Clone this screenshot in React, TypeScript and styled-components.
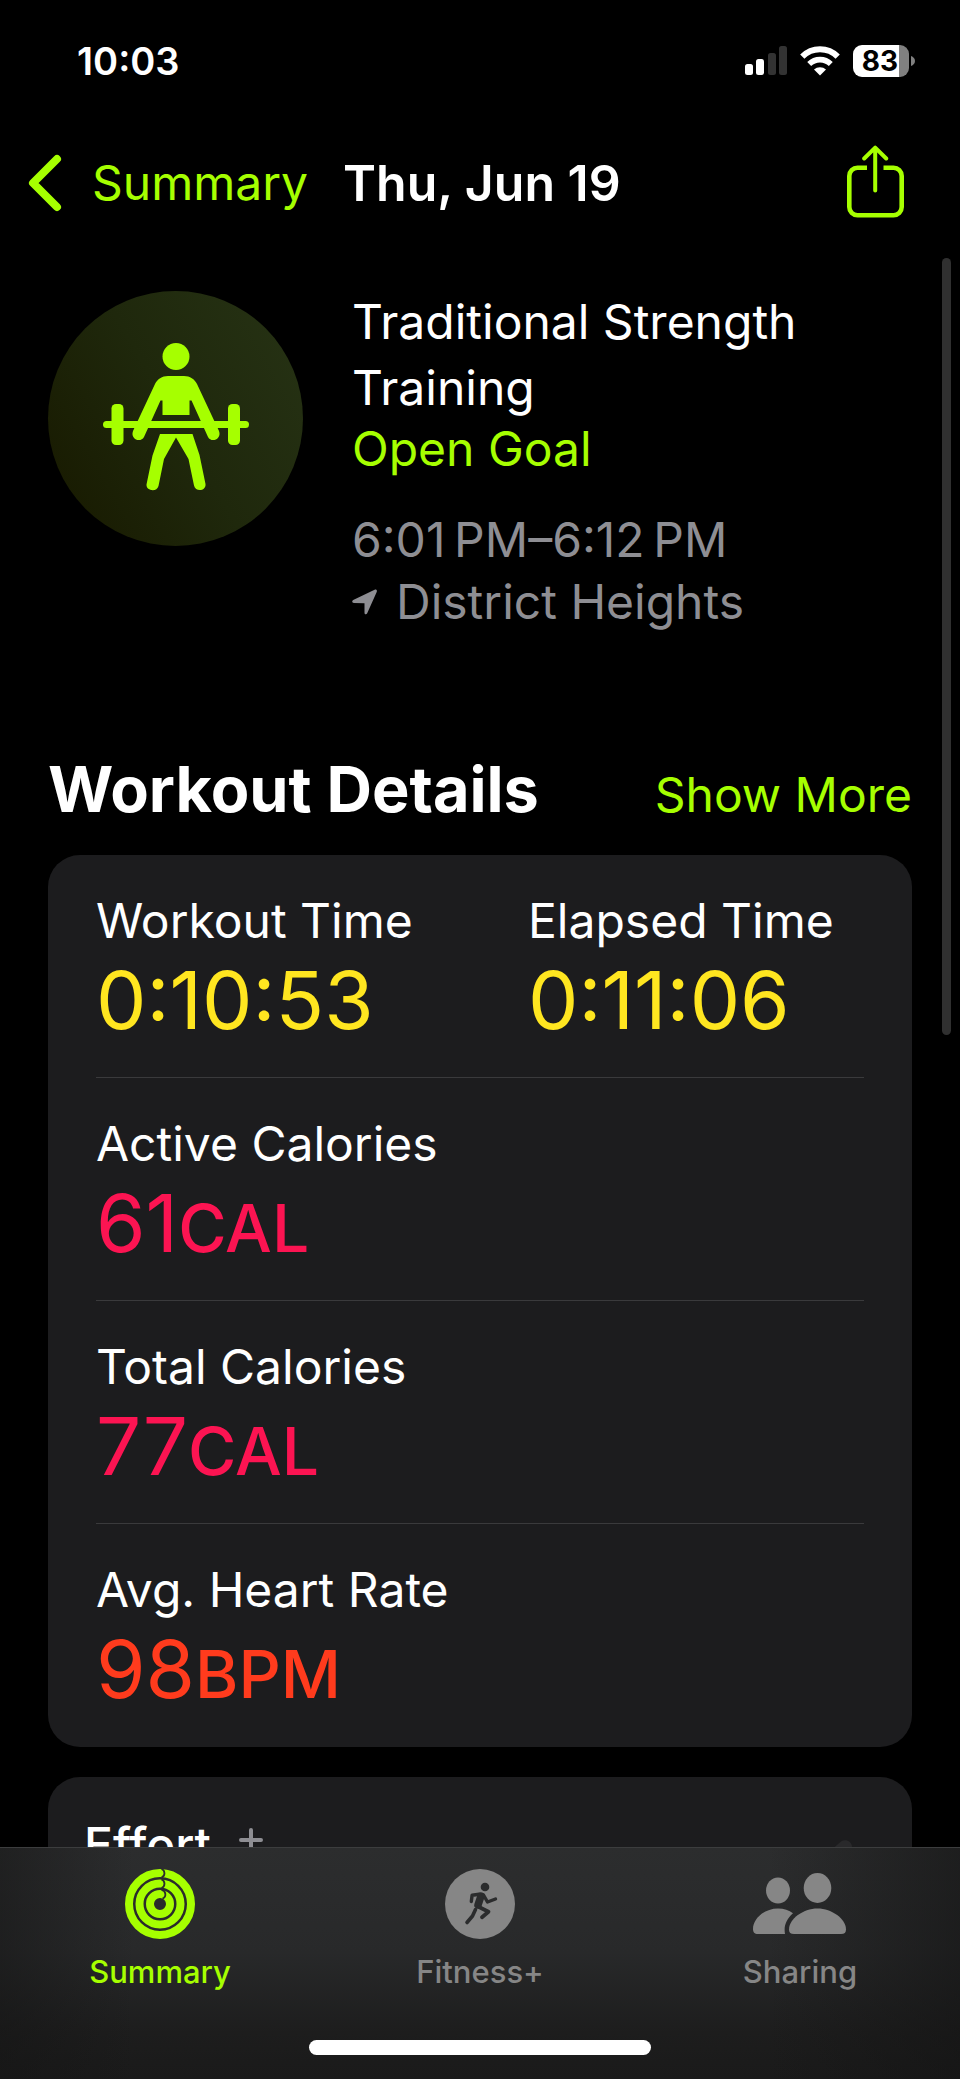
import React from 'react';
import styled, { createGlobalStyle } from 'styled-components';

const GREEN = '#a6ff00';
const YELLOW = '#ffe620';
const PINK = '#fc1452';
const ORANGE = '#ff3b1d';
const GRAY = '#8e8e93';
const TAB_GRAY = '#868686';
const CARD = '#1c1c1e';

const GlobalStyle = createGlobalStyle`
  *, *::before, *::after { box-sizing: border-box; }
  html, body { margin: 0; background: #000; }
  body {
    font-family: Inter, "Liberation Sans", sans-serif;
    font-size: 48px;
    line-height: 60px;
    color: #fff;
  }
  button, a { font: inherit; color: inherit; text-decoration: none; }
  button { margin: 0; padding: 0; border: 0; background: none; cursor: pointer; }
  h1, h2, h3, p, dl, dd, dt { margin: 0; font-size: inherit; font-weight: 400; }
  svg { display: block; flex: none; }
`;

const Screen = styled.div`
  position: relative;
  display: flex;
  flex-direction: column;
  height: 100vh;
  background: #000;
  overflow: hidden;
`;

const StatusBar = styled.div`
  display: flex;
  align-items: center;
  justify-content: space-between;
  padding: 37px 45px 0 77px;
  flex: none;
`;

const Clock = styled.time`
  font-size: 38px;
  line-height: 48px;
  font-weight: 600;
`;

const StatusIcons = styled.div`
  display: flex;
  align-items: center;
  gap: 13px;
`;

const Battery = styled.div`
  display: flex;
  align-items: center;
  gap: 2px;
`;

const BatteryBody = styled.div`
  width: 56px;
  height: 32px;
  border-radius: 9px;
  padding-right: 2px;
  background: linear-gradient(90deg, #fff 46px, #808080 46px);
  color: #000;
  font-size: 28px;
  line-height: 32px;
  font-weight: 700;
  text-align: center;
`;

const NavBar = styled.nav`
  display: flex;
  align-items: center;
  padding: 60px 56px 24px 28px;
  flex: none;
`;

const BackButton = styled.button`
  display: flex;
  align-items: center;
  gap: 30px;
  color: ${GREEN};
`;

const NavTitle = styled.h1`
  flex: 1;
  padding-left: 35px;
  && {
    font-size: 50px;
    font-weight: 600;
  }
`;

const ShareButton = styled.button`
  && { padding-bottom: 3px; }
`;

const Content = styled.main`
  flex: 1;
  min-height: 0;
  overflow-y: auto;
  scrollbar-width: none;
  padding: 44px 48px 0;
`;

const Hero = styled.section`
  display: flex;
  align-items: flex-start;
  gap: 49px;
`;

const Badge = styled.div`
  display: grid;
  place-items: center;
  flex: none;
  width: 255px;
  height: 255px;
  margin-top: 2px;
  border-radius: 50%;
  background: linear-gradient(60deg, #181a00 5%, #1f280c 50%, #263214 95%);
`;

const HeroText = styled.div`
  flex: 1;
  min-width: 0;
`;

const WorkoutName = styled.h2`
  && { line-height: 66px; }
`;

const Goal = styled.p`
  line-height: 56px;
  color: ${GREEN};
`;

const Meta = styled.div`
  display: flex;
  align-items: center;
  gap: 18px;
  line-height: 62px;
  color: ${GRAY};
`;

const MetaList = styled.div`
  margin-top: 32px;
`;

const SectionHeader = styled.header`
  display: flex;
  align-items: baseline;
  justify-content: space-between;
  padding: 116px 0 26px;
`;

const SectionTitle = styled.h2`
  && {
    font-size: 63px;
    line-height: 80px;
    font-weight: 700;
  }
`;

const ShowMore = styled.button`
  color: ${GREEN};
`;

const Card = styled.section`
  border-radius: 32px;
  background: ${CARD};
  padding: 0 48px;
`;

const MetricRow = styled.dl`
  display: grid;
  grid-template-columns: 1fr 1fr;
  column-gap: 96px;
  padding: 36px 0 28px;
  border-bottom: 1px solid #3a3a3c;
  &:last-child { border-color: transparent; }
`;

const Label = styled.dt`
  white-space: nowrap;
`;

const Value = styled.dd<{ $color: string }>`
  && { font-size: 80px; }
  line-height: 98px;
  white-space: nowrap;
  color: ${(p) => p.$color};
`;

const Unit = styled.span`
  font-size: 66px;
  line-height: 66px;
  font-weight: 500;
`;

const EffortCard = styled(Card)`
  display: flex;
  align-items: flex-start;
  margin-top: 30px;
  padding: 38px 60px 60px 36px;
`;

const EffortTitle = styled.h3`
  && { font-weight: 500; }
`;

const AddButton = styled.button`
  && { padding: 13px 28px; }
`;

const EffortArrow = styled.div`
  margin: 25px 0 0 auto;
`;

const ScrollThumb = styled.div`
  position: absolute;
  top: 258px;
  right: 9px;
  width: 9px;
  height: 777px;
  border-radius: 5px;
  background: #303030;
`;

const TabBar = styled.footer`
  flex: none;
  border-top: 1px solid #3c3d3e;
  padding: 21px 0 24px;
  background:
    linear-gradient(90deg, rgba(20, 20, 20, 0.5), rgba(20, 20, 20, 0) 14%, rgba(20, 20, 20, 0) 80%, rgba(20, 20, 20, 0.6)),
    linear-gradient(180deg, #2c2d2e 0%, #28292a 45%, #1d1d1d 80%, #1a1a1a 100%);
`;

const Tabs = styled.nav`
  display: grid;
  grid-template-columns: repeat(3, 1fr);
`;

const Tab = styled.a<{ $active?: boolean }>`
  display: flex;
  flex-direction: column;
  align-items: center;
  gap: 15px;
  && {
    font-size: 31px;
    line-height: 36px;
    font-weight: 500;
    color: ${(p) => (p.$active ? GREEN : TAB_GRAY)};
  }
`;

const HomeIndicator = styled.div`
  width: 342px;
  height: 15px;
  margin: 50px auto 0;
  border-radius: 8px;
  background: #fff;
`;

const SignalIcon = () => (
  <svg width="42" height="30" viewBox="0 0 42 30" aria-hidden="true">
    <rect x="0" y="18" width="8" height="11" rx="2.5" fill="#fff" />
    <rect x="11" y="13" width="8" height="16" rx="2.5" fill="#fff" />
    <rect x="23" y="7" width="8" height="22" rx="2.5" fill="#333" />
    <rect x="34" y="0" width="8" height="29" rx="2.5" fill="#333" />
  </svg>
);

const WifiIcon = () => (
  <svg width="40" height="30" viewBox="0 0 40 30" fill="none" stroke="#fff" strokeWidth="6" aria-hidden="true">
    <path d="M2.3 10.6a25 25 0 0 1 35.4 0" />
    <path d="M9.2 18a15.4 15.4 0 0 1 21.6 0" strokeWidth="5.6" />
    <path d="M20 29.6l-6-6a8.6 8.6 0 0 1 12 0z" fill="#fff" stroke="none" />
  </svg>
);

const BatteryTip = () => (
  <svg width="4" height="10" viewBox="0 0 4 10" aria-hidden="true">
    <path d="M0 0c2.4.8 4 2.7 4 5s-1.6 4.2-4 5z" fill="#808080" />
  </svg>
);

const ChevronIcon = () => (
  <svg width="34" height="58" viewBox="0 0 34 58" fill="none" stroke={GREEN} strokeWidth="8" strokeLinecap="round" strokeLinejoin="round" aria-hidden="true">
    <path d="M29 5L5 29l24 24" />
  </svg>
);

const ShareIcon = () => (
  <svg width="57" height="73" viewBox="0 0 57 73" fill="none" stroke={GREEN} strokeWidth="4.6" strokeLinecap="round" strokeLinejoin="round" aria-hidden="true">
    <path d="M20 22.7h-9.500a8.200 8.200 0 0 0-8.200 8.200v31.200a8.200 8.200 0 0 0 8.200 8.200h36a8.200 8.200 0 0 0 8.200-8.200V30.900a8.200 8.200 0 0 0-8.200-8.200H36.500" strokeLinecap="butt" />
    <path d="M28.2 3v42.500M17.200 13.500L28.200 2.600l11 10.900" strokeWidth="4" />
  </svg>
);

const LifterIcon = () => (
  <svg width="146" height="152" viewBox="0 0 146 152" fill={GREEN} aria-hidden="true">
    <circle cx="73" cy="13.5" r="13.5" />
    <path d="M65 33h16c6 0 10.500 3 13 8l22 47c3 8-7.500 12.500-11 6L88.500 57.500h-2V72h-27V57.500h-2L41 94c-3.500 6.500-14 2-11-6L52 41c2.500-5 7-8 13-8z" />
    <rect x="0" y="78" width="146" height="7" rx="3.5" />
    <rect x="8.5" y="61" width="12" height="41" rx="4.5" />
    <rect x="125" y="61" width="12" height="41" rx="4.5" />
    <path d="M57 91h32.500l7 21 6 29c1 7-10 8.500-11.500 1.500L85.500 116 73 94.500 61 116l-5.500 27c-1.500 6.500-12.500 5-12-1.500l6-29z" />
  </svg>
);

const LocationIcon = () => (
  <svg width="26" height="26" viewBox="0 0 26 26" fill={GRAY} aria-hidden="true">
    <path d="M1.200 11L22.600.8c1.600-.7 2.800.5 2.100 2.100L15.200 24.300c-.7 1.500-2.700 1.200-2.700-.6V14.200l-10.600-.3C0 13.800-.4 11.800 1.200 11z" />
  </svg>
);

const PlusIcon = () => (
  <svg width="24" height="24" viewBox="0 0 24 24" stroke={GRAY} strokeWidth="4" strokeLinecap="round" aria-hidden="true">
    <path d="M12 2v20M2 12h20" />
  </svg>
);

const ArrowShape = () => (
  <svg width="22" height="30" viewBox="0 0 22 30" aria-hidden="true">
    <path d="M0 11L11 1.500C15-1.500 22 1 22 7v23H0z" fill="#29292b" />
  </svg>
);

const RingsIcon = () => (
  <svg width="70" height="70" viewBox="0 0 70 70" fill="none" aria-hidden="true">
    <circle cx="35" cy="35" r="31" stroke={GREEN} strokeWidth="8" />
    <circle cx="35" cy="35" r="20.5" stroke={GREEN} strokeWidth="8" />
    <circle cx="35" cy="35" r="10" stroke={GREEN} strokeWidth="8" />
    <g stroke="#2b2c2d" strokeWidth="1.8">
      <path d="M36.500 0a4.600 4.600 0 0 1 0 8.600" />
      <path d="M36.500 10.400a4.600 4.600 0 0 1 0 8.600" />
      <path d="M36.500 20.800a4.600 4.600 0 0 1 1 8.800" />
    </g>
  </svg>
);

const RunnerIcon = () => (
  <svg width="70" height="70" viewBox="0 0 70 70" fill="none" aria-hidden="true">
    <circle cx="35" cy="35" r="35" fill={TAB_GRAY} />
    <circle cx="40" cy="18" r="4.3" fill="#2b2c2d" />
    <g stroke="#2b2c2d" strokeLinecap="round" strokeLinejoin="round">
      <path d="M26.300 32.500l.8-6.300 7-.9" strokeWidth="3.4" />
      <path d="M36 27l-3 9" strokeWidth="7.5" />
      <path d="M38.500 26l4 7 8-3" strokeWidth="3.4" />
      <path d="M34 38l9.500 4.700-6.500 5.500" strokeWidth="3.8" />
      <path d="M30.500 40.500l-3 6.500-5.500 6.500" strokeWidth="3.6" />
    </g>
  </svg>
);

const PeopleIcon = () => (
  <svg width="94" height="70" viewBox="0 0 94 70" fill={TAB_GRAY} aria-hidden="true">
    <ellipse cx="25" cy="21.5" rx="12" ry="13" />
    <ellipse cx="64.5" cy="19" rx="13.8" ry="15" />
    <path d="M40 44.300C33.500 50 30.500 57 32 65H5c-3.500 0-5-2-5-5 0-10 11-20.500 25-20.500 6 0 11 1.800 15 4.800z" />
    <path d="M64.500 39.500C79 39.500 93 50 93 60.500c0 3-1.500 4.500-5 4.500H41c-3.500 0-5-1.500-5-4.500C36 50 50 39.500 64.500 39.500z" />
  </svg>
);

type Metric = { label: string; value: string; unit?: string; color: string };

const rows: Metric[][] = [
  [
    { label: 'Workout Time', value: '0:10:53', color: YELLOW },
    { label: 'Elapsed Time', value: '0:11:06', color: YELLOW },
  ],
  [{ label: 'Active Calories', value: '61', unit: 'CAL', color: PINK }],
  [{ label: 'Total Calories', value: '77', unit: 'CAL', color: PINK }],
  [{ label: 'Avg. Heart Rate', value: '98', unit: 'BPM', color: ORANGE }],
];

export default function App() {
  return (
    <>
      <GlobalStyle />
      <Screen>
        <StatusBar>
          <Clock>10:03</Clock>
          <StatusIcons>
            <SignalIcon />
            <WifiIcon />
            <Battery>
              <BatteryBody>83</BatteryBody>
              <BatteryTip />
            </Battery>
          </StatusIcons>
        </StatusBar>

        <NavBar>
          <BackButton type="button">
            <ChevronIcon />
            Summary
          </BackButton>
          <NavTitle>Thu, Jun 19</NavTitle>
          <ShareButton type="button" aria-label="Share">
            <ShareIcon />
          </ShareButton>
        </NavBar>

        <Content>
          <Hero>
            <Badge>
              <LifterIcon />
            </Badge>
            <HeroText>
              <WorkoutName>Traditional Strength Training</WorkoutName>
              <Goal>Open Goal</Goal>
              <MetaList>
                <Meta>{'6:01\u2009PM–6:12\u2009PM'}</Meta>
                <Meta>
                  <LocationIcon />
                  District Heights
                </Meta>
              </MetaList>
            </HeroText>
          </Hero>

          <SectionHeader>
            <SectionTitle>Workout Details</SectionTitle>
            <ShowMore type="button">Show More</ShowMore>
          </SectionHeader>

          <Card>
            {rows.map((row) => (
              <MetricRow key={row[0].label}>
                {row.map((m) => (
                  <div key={m.label}>
                    <Label>{m.label}</Label>
                    <Value $color={m.color}>
                      {m.value}
                      {m.unit && <Unit>{m.unit}</Unit>}
                    </Value>
                  </div>
                ))}
              </MetricRow>
            ))}
          </Card>

          <EffortCard>
            <EffortTitle>Effort</EffortTitle>
            <AddButton type="button" aria-label="Add effort">
              <PlusIcon />
            </AddButton>
            <EffortArrow>
              <ArrowShape />
            </EffortArrow>
          </EffortCard>
        </Content>

        <TabBar>
          <Tabs>
            <Tab href="#summary" $active>
              <RingsIcon />
              Summary
            </Tab>
            <Tab href="#fitness">
              <RunnerIcon />
              Fitness+
            </Tab>
            <Tab href="#sharing">
              <PeopleIcon />
              Sharing
            </Tab>
          </Tabs>
          <HomeIndicator />
        </TabBar>
        <ScrollThumb />
      </Screen>
    </>
  );
}
